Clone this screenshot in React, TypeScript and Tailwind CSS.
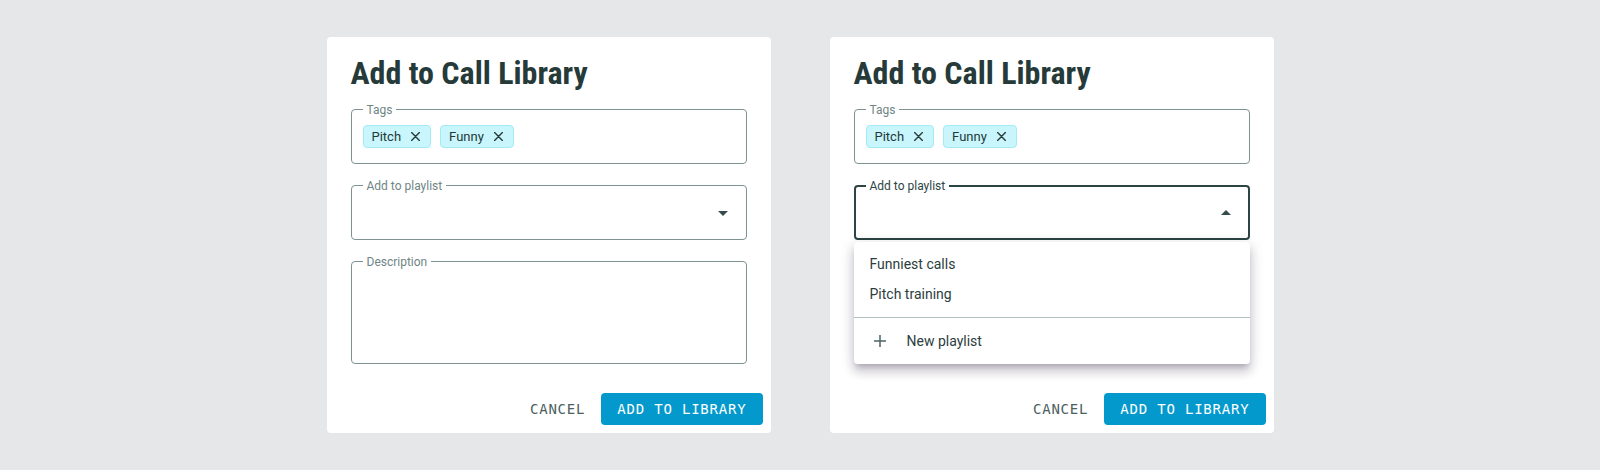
import clsx from 'clsx';

const sans = 'font-[Roboto,"Liberation_Sans",sans-serif]';

function XIcon() {
  return (
    <svg width="9" height="9" viewBox="0 0 9 9" className="shrink-0">
      <path d="M0.6 0.6 L8.4 8.4 M8.4 0.6 L0.6 8.4" stroke="#2a3d3d" strokeWidth="1.4" strokeLinecap="round" />
    </svg>
  );
}

function Chip({ label }: { label: string }) {
  return (
    <div className="flex h-[23px] items-center gap-[10px] rounded-[4px] border border-[#a2ebf6] bg-[#c9f6fc] pl-2 pr-[10px] text-[13px] text-[#22393a]">
      <span>{label}</span>
      <XIcon />
    </div>
  );
}

function Caret({ up }: { up?: boolean }) {
  return (
    <svg width="24" height="24" viewBox="0 0 24 24" className="shrink-0">
      <path d={up ? 'M7 14l5-5 5 5z' : 'M7 10l5 5 5-5z'} fill="#364b4b" />
    </svg>
  );
}

interface FieldProps {
  label: string;
  focused?: boolean;
  className?: string;
  children?: React.ReactNode;
}

function Field({ label, focused, className, children }: FieldProps) {
  return (
    <div
      className={clsx(
        'relative rounded-[4px]',
        focused ? 'border-2 border-[#2c4443]' : 'border border-[#7e9292]',
        className
      )}
    >
      <span
        className={clsx(
          'absolute bg-white px-1 text-[12px] leading-[14px]',
          focused ? '-top-[8px] left-[10px] text-[#2c4443]' : '-top-[7px] left-[11px] text-[#6f8585]'
        )}
      >
        {label}
      </span>
      {children}
    </div>
  );
}

function Dialog({ open }: { open?: boolean }) {
  return (
    <div className={clsx('flex h-[396px] w-[444px] flex-col rounded-[4px] bg-white', sans)}>
      <div className="flex flex-col pl-[24px] pr-[24px] pt-4">
        <h2 className='mb-4 h-[40px] text-[32px] leading-[40px] font-bold text-[#253a39] font-["Roboto_Condensed",Roboto,sans-serif]'>
          Add to Call Library
        </h2>

        <Field label="Tags" className="flex h-[55px] items-center gap-[9px] px-[11px]">
          <Chip label="Pitch" />
          <Chip label="Funny" />
        </Field>

        <div className="relative mt-[21px]">
          <Field
            label="Add to playlist"
            focused={open}
            className={clsx('flex h-[55px] items-center justify-end', open ? 'pr-[10px]' : 'pr-[11px]')}
          >
            <Caret up={open} />
          </Field>

          {open && (
            <div className="absolute top-full left-0 right-0 z-10 mt-[2px] rounded-[4px] bg-white text-[14px] text-[#2b3d3d] shadow-[0_5px_5px_-3px_rgba(30,20,50,0.2),0_8px_10px_1px_rgba(30,20,50,0.14),0_3px_14px_2px_rgba(30,20,50,0.12)]">
              <div className="pt-[7px] pb-[8px]">
                <div className="flex h-[30px] items-center px-4">Funniest calls</div>
                <div className="flex h-[30px] items-center px-4">Pitch training</div>
              </div>
              <div className="h-px bg-[#b3c0c2]" />
              <div className="py-2">
                <div className="flex h-[30px] items-center gap-[20px] px-4">
                  <svg width="14" height="14" viewBox="0 0 14 14" className="ml-[3px]">
                    <path d="M7 1v12M1 7h12" stroke="#4d6363" strokeWidth="1.5" />
                  </svg>
                  <span>New playlist</span>
                </div>
              </div>
            </div>
          )}
        </div>

        <Field label="Description" className={clsx('mt-[21px] h-[103px]', open && 'invisible')} />
      </div>

      <div className='mt-[29px] flex items-center justify-end gap-2 px-2 font-["DejaVu_Sans_Mono","Liberation_Mono",monospace] text-[14px] tracking-[0.8px]'>
        <button className="flex h-8 items-center px-2 text-[#4b6060]">CANCEL</button>
        <button className="flex h-8 items-center rounded-[4px] bg-[#0399cd] px-4 text-white">ADD TO LIBRARY</button>
      </div>
    </div>
  );
}

export default function App() {
  return (
    <div className="flex h-[470px] w-[1600px] items-center justify-center gap-[59px] bg-[#e6e7e9]">
      <Dialog />
      <Dialog open />
    </div>
  );
}
